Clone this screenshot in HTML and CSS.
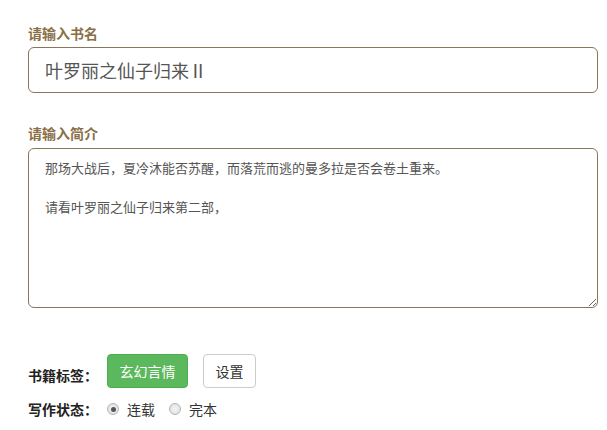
FILE: index.html
```html
<!DOCTYPE html>
<html lang="zh-CN">
<head>
<meta charset="utf-8">
<title>书籍信息</title>
<link rel="stylesheet" href="styles.css">
</head>
<body>
<form class="form">
  <div class="field">
    <label class="field-label" for="name">请输入书名</label>
    <input class="text-input" id="name" type="text" value="叶罗丽之仙子归来Ⅱ">
  </div>
  <div class="field field-intro">
    <label class="field-label" for="intro">请输入简介</label>
    <textarea class="text-area" id="intro">那场大战后，夏冷沐能否苏醒，而落荒而逃的曼多拉是否会卷土重来。

请看叶罗丽之仙子归来第二部，</textarea>
  </div>
  <div class="row row-tags">
    <span class="row-label">书籍标签：</span>
    <button type="button" class="btn btn-green">玄幻言情</button>
    <button type="button" class="btn btn-white">设置</button>
  </div>
  <div class="row row-status">
    <span class="row-label">写作状态：</span>
    <label class="radio"><input type="radio" name="status" checked><span>连载</span></label>
    <label class="radio"><input type="radio" name="status"><span>完本</span></label>
  </div>
</form>
</body>
</html>
```
FILE: styles.css
```css
html, body {
  margin: 0;
  padding: 0;
  background: #ffffff;
}
body {
  font-family: "Noto Sans CJK SC", "Microsoft YaHei", sans-serif;
  color: #333;
}
.form {
  width: 570px;
  padding: 24px 0 0 28px;
  display: flex;
  flex-direction: column;
}
.field {
  display: flex;
  flex-direction: column;
}
.field-intro {
  margin-top: 31px;
}
.field-label {
  font-size: 14px;
  line-height: 18px;
  font-weight: bold;
  color: #8a6f47;
}
.text-input {
  margin-top: 5px;
  height: 46px;
  box-sizing: border-box;
  border: 1px solid #857757;
  border-radius: 6px;
  padding: 0 16px;
  font-family: inherit;
  font-size: 18px;
  color: #555;
  outline: none;
  background: #fff;
}
.text-area {
  margin-top: 6px;
  height: 160px;
  box-sizing: border-box;
  border: 1px solid #857757;
  border-radius: 6px;
  padding: 9px 16px;
  font-family: inherit;
  font-size: 13px;
  line-height: 19.5px;
  color: #555;
  outline: none;
  background: #fff;
  resize: both;
}
.row {
  display: flex;
  align-items: flex-start;
}
.row-tags {
  margin-top: 46px;
}
.row-label {
  width: 79px;
  flex: none;
  font-size: 14px;
  line-height: 20px;
  font-weight: bold;
  color: #222;
}
.row-tags .row-label {
  margin-top: 11px;
}
.btn {
  height: 34px;
  box-sizing: border-box;
  padding: 0;
  border-radius: 4px;
  font-family: inherit;
  font-size: 14px;
  line-height: 20px;
  cursor: pointer;
}
.btn-green {
  width: 81px;
  background: #5cb85c;
  border: 1px solid #4cae4c;
  color: #fff;
}
.btn-white {
  width: 53px;
  margin-left: 15px;
  background: #fff;
  border: 1px solid #cccccc;
  color: #333;
}
.row-status {
  margin-top: 11px;
  align-items: center;
}
.radio {
  display: flex;
  align-items: center;
  font-size: 14px;
  line-height: 20px;
  color: #333;
  margin-right: 14px;
}
.radio input {
  appearance: none;
  -webkit-appearance: none;
  width: 12px;
  height: 12px;
  margin: 0 8px 0 0;
  border: 1px solid #b5b5b5;
  border-radius: 50%;
  background: radial-gradient(circle, #f4f4f4 0, #dcdcdc 100%);
  box-sizing: border-box;
  position: relative;
}
.radio input:checked::after {
  content: "";
  position: absolute;
  left: 2.5px;
  top: 2.5px;
  width: 5px;
  height: 5px;
  border-radius: 50%;
  background: #555;
}
```
